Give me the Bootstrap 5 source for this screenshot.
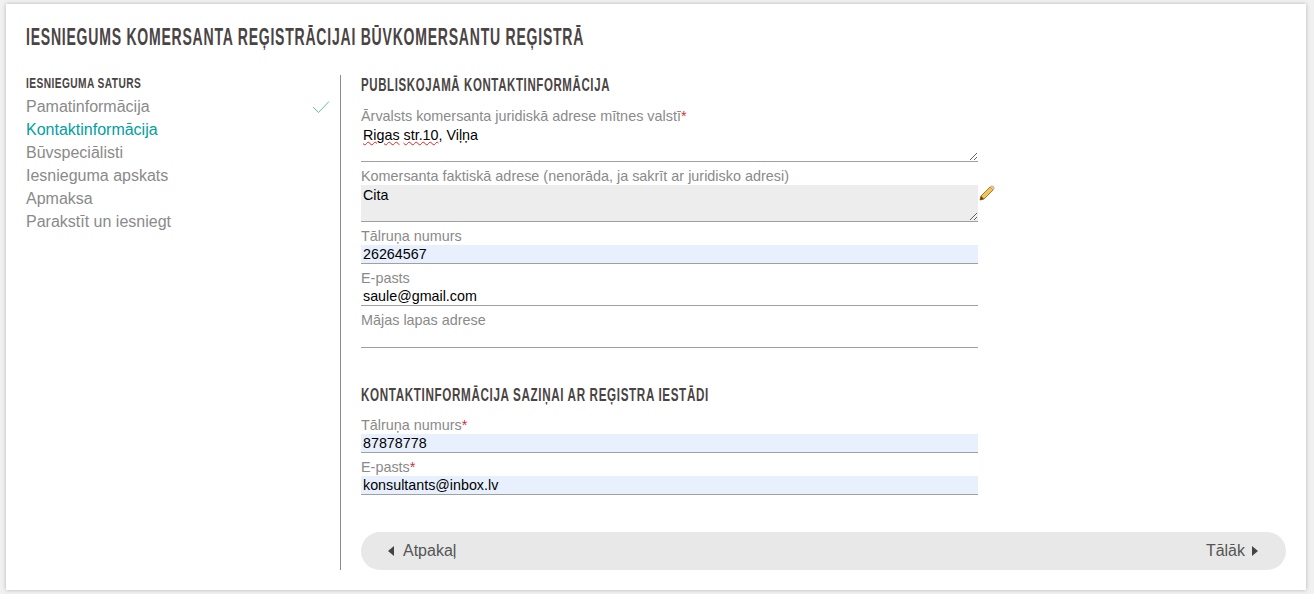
<!DOCTYPE html>
<html lang="lv">
<head>
  <meta charset="UTF-8" />
  <meta name="viewport" content="width=device-width, initial-scale=1" />
  <title>Iesniegums</title>
  <link href="https://cdn.jsdelivr.net/npm/bootstrap@5.3.3/dist/css/bootstrap.min.css" rel="stylesheet" />
  <style>
    html, body { height: 100%; }
    body {
      background: #f1f1f1;
      font-family: "Liberation Sans", Arial, sans-serif;
      overflow: hidden;
      padding: 4px 8px 4px 6px;
    }
    .sheet {
      background: #fff;
      height: 586px;
      padding: 18px 20px 20px 20px;
      box-shadow: 0 0 4px rgba(0, 0, 0, .25);
    }
    /* heading font of the original is a tall condensed one, squeeze a bold sans to get near it */
    .head-font {
      font-family: "Liberation Sans", sans-serif;
      font-weight: 700;
      color: #4a4444;
      text-transform: uppercase;
      white-space: nowrap;
      transform-origin: left center;
      margin: 0;
    }
    .page-title { font-size: 24px; line-height: 30px; letter-spacing: 1.3px; margin-bottom: 23px; transform: scaleX(.585); }
    .side-title { font-size: 15px; line-height: 16px; letter-spacing: .6px; margin-bottom: 4px; transform: scaleX(.68); }
    .section-title { font-size: 18.500px; line-height: 20px; letter-spacing: 1px; transform: scaleX(.62); }
    .second-head { transform: scaleX(.631); margin-top: 37px; margin-bottom: 10px; }
    .first-head { margin-bottom: 11px; }
    .side-col { width: 315px; }
    .side-link {
      display: flex;
      justify-content: space-between;
      align-items: center;
      font-size: 16px;
      line-height: 23px;
      color: #8a8a8a;
      text-decoration: none;
    }
    .side-link.current { color: #00a0a0; }
    .side-tick { margin-right: 10px; }
    .main-col { border-left: 1px solid #8c8c8c; padding-left: 20px; height: 495px; width: 946px; }
    .field { width: 617px; position: relative; margin-bottom: 4px; }
    .field-label { display: block; font-size: 14.400px; line-height: 17px; height: 19px; padding-top: 2px; color: #8a8a8a; margin: 0; }
    .field-label i { color: #c33; font-style: normal; }
    .field-val {
      display: block;
      width: 100%;
      height: 19px;
      padding: 0 2px;
      border: 0;
      border-bottom: 1px solid #a0a0a0;
      border-radius: 0;
      background: transparent;
      font-size: 14.300px;
      line-height: 18px;
      color: #000;
      font-family: inherit;
    }
    .field-val.filled { background: #e8f0fe; }
    .field-area {
      height: 37px;
      padding-top: 1px;
      resize: vertical;
      overflow: hidden;
    }
    .field-area.locked { background: #ededed; }
    .typo { text-decoration: underline wavy #d22; text-decoration-thickness: 1px; }
    .edit-pen { position: absolute; left: 618px; top: 19px; }
    .nav-pill {
      background: #e8e8e8;
      border-radius: 19px;
      height: 38px;
      padding: 0 28px 0 27px;
      width: 925px;
      margin-top: 37px;
    }
    .nav-pill a { color: #555; font-size: 16px; text-decoration: none; display: flex; align-items: center; gap: 9px; }
    .nav-pill a.next { gap: 7px; }
    .tri-l, .tri-r { width: 0; height: 0; border-top: 5px solid transparent; border-bottom: 5px solid transparent; }
    .tri-l { border-right: 6px solid #444; }
    .tri-r { border-left: 6px solid #444; }
  </style>
</head>
<body>

<div class="sheet">
  <h1 class="head-font page-title">Iesniegums komersanta reģistrācijai būvkomersantu reģistrā</h1>

  <div class="d-flex">
    <!-- Sidebar -->
    <div class="side-col">
      <h6 class="head-font side-title">Iesnieguma saturs</h6>
      <a class="side-link" href="#">Pamatinformācija
        <svg class="side-tick" width="18" height="14" viewBox="0 0 18 14"><path d="M1 7l5.500 5.500L17 1.500" fill="none" stroke="#5fbdb8" stroke-width="1"/></svg>
      </a>
      <a class="side-link current" href="#">Kontaktinformācija</a>
      <a class="side-link" href="#">Būvspeciālisti</a>
      <a class="side-link" href="#">Iesnieguma apskats</a>
      <a class="side-link" href="#">Apmaksa</a>
      <a class="side-link" href="#">Parakstīt un iesniegt</a>
    </div>

    <!-- Form -->
    <div class="main-col">
      <h2 class="head-font section-title first-head">Publiskojamā kontaktinformācija</h2>

      <div class="field">
        <label class="field-label">Ārvalsts komersanta juridiskā adrese mītnes valstī<i>*</i></label>
        <div class="field-val field-area"><span class="typo">Rigas</span> <span class="typo">str.10</span>, Viļņa</div>
      </div>
      <div class="field">
        <label class="field-label">Komersanta faktiskā adrese (nenorāda, ja sakrīt ar juridisko adresi)</label>
        <div class="field-val field-area locked">Cita</div>
        <svg class="edit-pen" width="16" height="16" viewBox="0 0 16 16">
          <path d="M1 15l1-4L11 2l3 3-9 9z" fill="#eec45c" stroke="#b07c28" stroke-width="1"/>
          <path d="M11 2l1.500-1 2 .4.600 2L14 5z" fill="#f0c8a0" stroke="#c89868" stroke-width=".8"/>
          <path d="M1 15l1-4 3 3z" fill="#6a3a10"/>
        </svg>
      </div>
      <div class="field">
        <label class="field-label">Tālruņa numurs</label>
        <input class="field-val filled" value="26264567" />
      </div>
      <div class="field">
        <label class="field-label">E-pasts</label>
        <input class="field-val" value="saule@gmail.com" />
      </div>
      <div class="field">
        <label class="field-label">Mājas lapas adrese</label>
        <input class="field-val" value="" />
      </div>

      <h2 class="head-font section-title second-head">Kontaktinformācija saziņai ar reģistra iestādi</h2>

      <div class="field">
        <label class="field-label">Tālruņa numurs<i>*</i></label>
        <input class="field-val filled" value="87878778" />
      </div>
      <div class="field">
        <label class="field-label">E-pasts<i>*</i></label>
        <input class="field-val filled" value="konsultants@inbox.lv" />
      </div>

      <div class="nav-pill d-flex justify-content-between align-items-center">
        <a href="#"><span class="tri-l"></span>Atpakaļ</a>
        <a class="next" href="#">Tālāk<span class="tri-r"></span></a>
      </div>
    </div>
  </div>
</div>

<script src="https://cdn.jsdelivr.net/npm/bootstrap@5.3.3/dist/js/bootstrap.bundle.min.js"></script>
</body>
</html>
